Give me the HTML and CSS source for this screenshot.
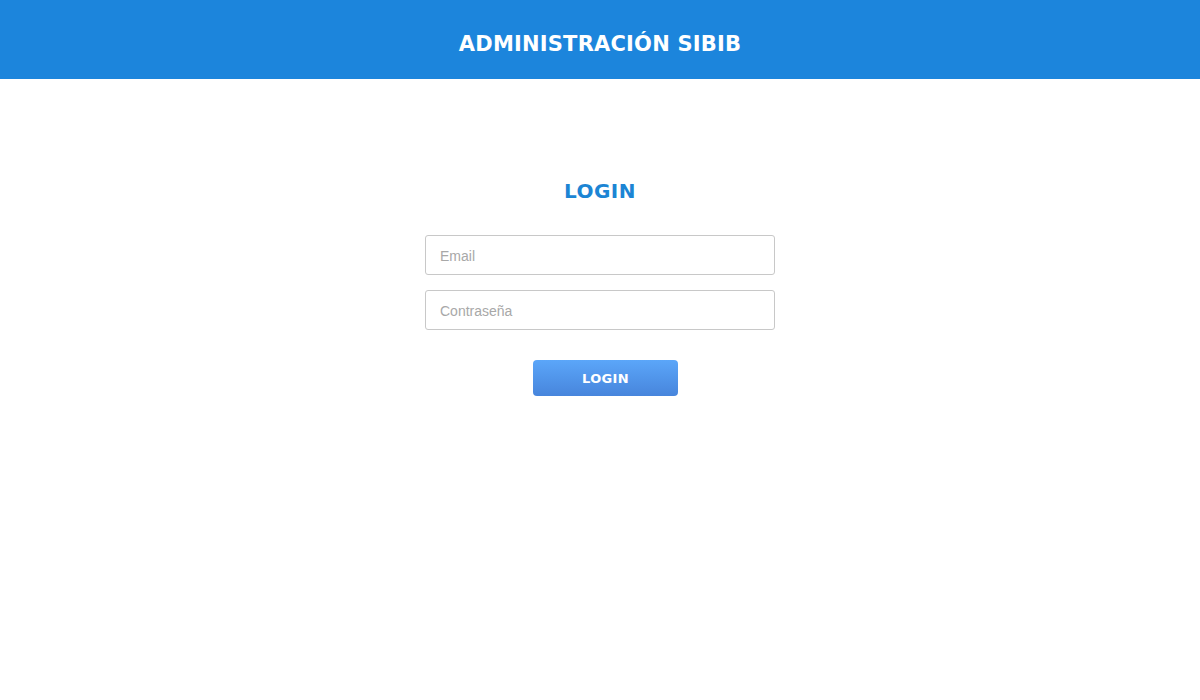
FILE: index.html
```html
<!DOCTYPE html>
<html lang="es">
<head>
<meta charset="utf-8">
<title>Administración SIBIB</title>
<link rel="stylesheet" href="styles.css">
</head>
<body>
<header class="topbar">
  <h1 class="brand">ADMINISTRACIÓN SIBIB</h1>
</header>
<main class="content">
  <form class="login-form">
    <h2 class="login-title">LOGIN</h2>
    <input class="field" type="email" placeholder="Email">
    <input class="field" type="password" placeholder="Contraseña">
    <div class="actions">
      <button class="btn" type="button">LOGIN</button>
    </div>
  </form>
</main>
</body>
</html>
```
FILE: styles.css
```css
* { box-sizing: border-box; }
html, body { margin: 0; padding: 0; background: #fff; }
body { font-family: "Liberation Sans", Arial, sans-serif; }

.topbar {
  height: 79px;
  background: #1c85dc;
  display: flex;
  align-items: center;
  justify-content: center;
}
.brand {
  margin: 0;
  color: #fff;
  font-family: "DejaVu Sans", sans-serif;
  font-weight: bold;
  font-size: 21px;
  letter-spacing: 0.2px;
  padding-top: 8px;
}

.content {
  display: flex;
  justify-content: center;
  padding-top: 100px;
}
.login-form {
  width: 350px;
  display: flex;
  flex-direction: column;
  align-items: center;
}
.login-title {
  margin: 0 0 33px;
  height: 23px;
  line-height: 23px;
  color: #1c85d4;
  font-family: "DejaVu Sans", sans-serif;
  font-weight: bold;
  font-size: 20px;
  letter-spacing: 0.5px;
  padding-top: 1px;
}
.field {
  width: 350px;
  height: 40px;
  margin: 0 0 15px;
  padding: 2px 14px 0;
  border: 1px solid #c8c8c8;
  border-radius: 3px;
  font-family: "Liberation Sans", Arial, sans-serif;
  font-size: 14px;
  color: #333;
  outline: none;
}
.field::placeholder { color: #a8a8a8; }

.actions {
  width: 100%;
  display: flex;
  justify-content: center;
  padding-left: 11px;
  margin-top: 15px;
}
.btn {
  width: 145px;
  height: 36px;
  border: none;
  border-radius: 4px;
  background: linear-gradient(#5ba6f9, #4785dc);
  color: #fff;
  font-family: "DejaVu Sans", sans-serif;
  font-weight: bold;
  font-size: 13px;
  letter-spacing: 0.3px;
  cursor: pointer;
}
```
